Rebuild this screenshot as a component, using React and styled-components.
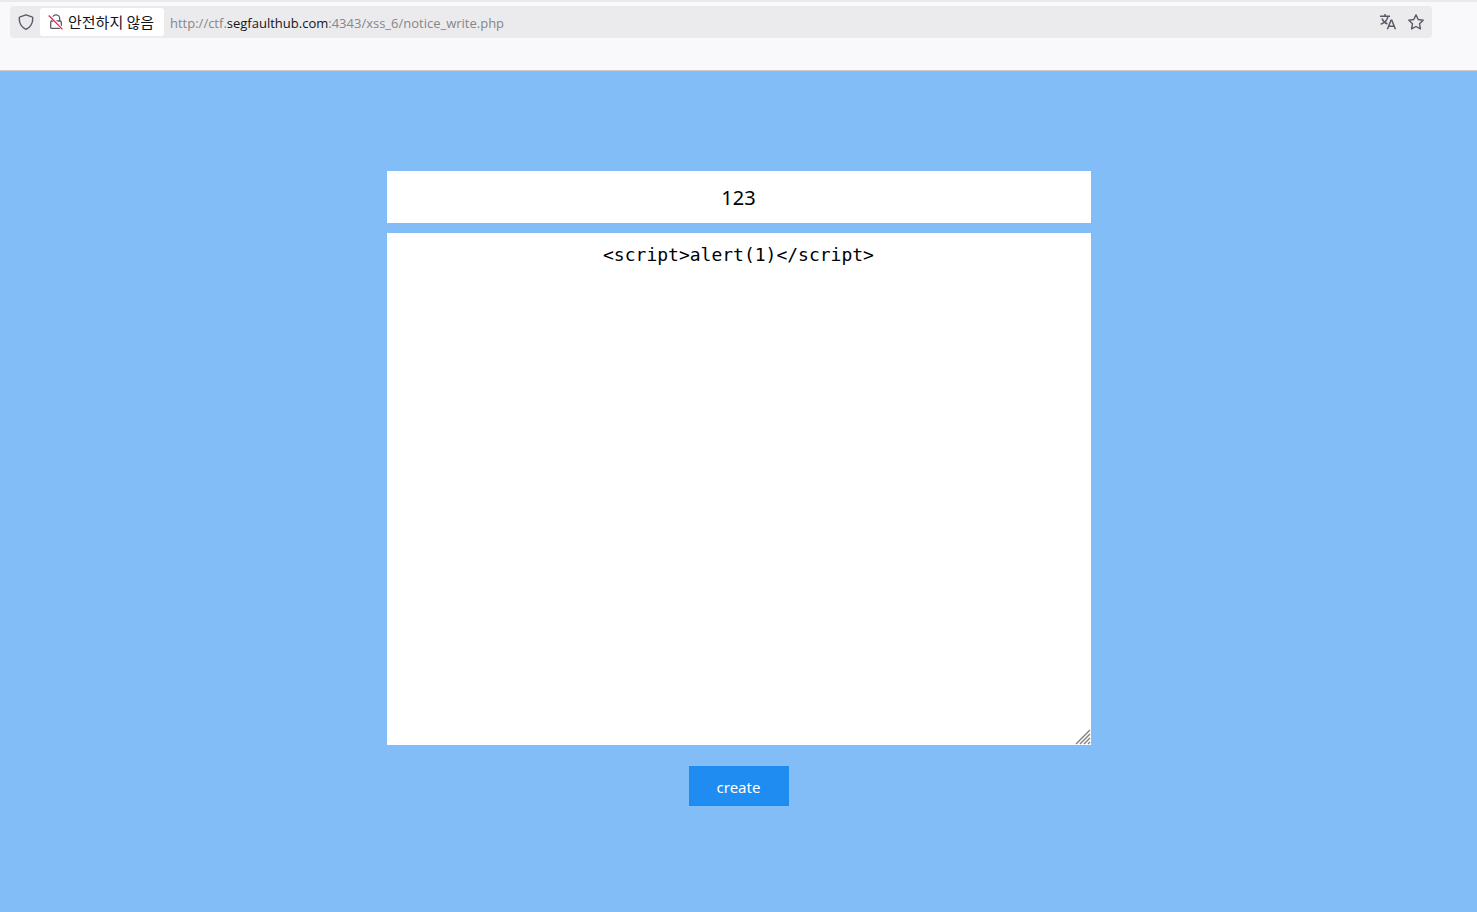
import React from "react";
import styled, { createGlobalStyle } from "styled-components";

const GlobalStyle = createGlobalStyle`
  * { box-sizing: border-box; }
  body {
    margin: 0;
    background: #83bdf7;
    font-family: "Noto Sans", "Noto Sans CJK KR", sans-serif;
  }
`;

const Page = styled.div`
  min-height: 100vh;
  display: flex;
  flex-direction: column;
`;

const Toolbar = styled.header`
  height: 71px;
  padding: 4px 45px 0 10px;
  background: #f9f9fb;
  border-top: 2px solid #eaeaed;
  border-bottom: 1px solid #cccccc;
`;

const AddressBar = styled.div`
  display: flex;
  align-items: center;
  height: 32px;
  padding: 0 2px 0 6px;
  border-radius: 4px;
  background: #ebebed;
`;

const IconButton = styled.button`
  display: flex;
  align-items: center;
  justify-content: center;
  width: ${(p) => p.$width || 28}px;
  height: 28px;
  padding: 0;
  border: 0;
  background: transparent;
  color: #5b5b66;
`;

const SecurityButton = styled.button`
  display: flex;
  align-items: center;
  gap: 4px;
  min-width: 124px;
  height: 28px;
  margin-left: 4px;
  padding: 0 8px;
  border: 0;
  border-radius: 3px;
  background: #ffffff;
  color: #15141a;
  font-family: "Noto Sans CJK KR", sans-serif;
  font-size: 15px;
  line-height: 20px;
  white-space: nowrap;
`;

const Address = styled.div`
  flex: 1;
  min-width: 0;
  padding: 2px 0 0 6px;
  overflow: hidden;
  color: #86868a;
  font-family: "Open Sans", sans-serif;
  font-size: 13px;
  line-height: 20px;
  white-space: nowrap;
`;

const Domain = styled.span`
  color: #15141a;
`;

const Form = styled.form`
  display: flex;
  flex-direction: column;
  align-items: center;
  width: 100%;
  max-width: 704px;
  margin: 100px auto 0;
`;

const TitleInput = styled.input`
  width: 100%;
  height: 52px;
  padding: 0 10px;
  border: 0;
  border-radius: 0;
  background: #ffffff;
  color: #000000;
  font-family: "Noto Sans", sans-serif;
  font-size: 20px;
  text-align: center;
`;

const ContentField = styled.div`
  position: relative;
  width: 100%;
  margin-top: 10px;
`;

const ContentArea = styled.textarea`
  display: block;
  width: 100%;
  height: 512px;
  padding: 10px;
  border: 0;
  border-radius: 0;
  background: #ffffff;
  color: #000000;
  font-family: "DejaVu Sans Mono", monospace;
  font-size: 18px;
  line-height: 24px;
  text-align: center;
  resize: vertical;

  &::-webkit-resizer {
    background: transparent;
  }
`;

const ResizeGrip = styled.svg`
  position: absolute;
  right: 0;
  bottom: 0;
  pointer-events: none;
`;

const CreateButton = styled.button`
  width: 100px;
  height: 40px;
  margin-top: 21px;
  padding: 2px 0 0;
  border: 0;
  background: #1e8cf1;
  color: #ffffff;
  font-family: "Noto Sans", sans-serif;
  font-size: 15px;
`;

function ShieldIcon() {
  return (
    <svg width="16" height="16" viewBox="0 0 16 16" fill="none" stroke="currentColor" strokeWidth="1.4" strokeLinejoin="round" aria-hidden="true">
      <path d="M8 .8 13.900 2.800c.6.2.9.6.9 1.200 0 5.300-2.200 9.300-6.800 11.300C3.400 13.300 1.200 9.300 1.200 4c0-.6.3-1 .9-1.200Z" />
    </svg>
  );
}

function InsecureLockIcon() {
  return (
    <svg width="16" height="16" viewBox="0 0 16 16" fill="none" strokeWidth="1.3" aria-hidden="true">
      <g stroke="#5b5b66">
        <path d="M4.300 7V4.500a3.700 3.700 0 0 1 7.400 0V7" />
        <rect x="2.700" y="7" width="10.600" height="7.400" rx="1.200" />
      </g>
      <path d="M1.500 1.500 14.500 15" stroke="#ffffff" strokeWidth="2.800" />
      <path d="M.8 1.500 14.500 15.400" stroke="#e22850" />
    </svg>
  );
}

function TranslateIcon() {
  return (
    <svg width="16" height="16" viewBox="0 0 16 16" fill="none" stroke="currentColor" strokeWidth="1.5" aria-hidden="true">
      <path d="M0 2.200h10M5 0v2.200M8 2.200C7.400 6 4.500 9 .7 10.300M2 4.500c1 2.700 3 4.500 5.500 5.500" />
      <path d="M7.400 15.300 11 6.300h.8l3.600 9M8.600 12.300h5.600" />
    </svg>
  );
}

function StarIcon() {
  return (
    <svg width="16" height="16" viewBox="0 0 16 16" fill="none" stroke="currentColor" strokeWidth="1.4" strokeLinejoin="round" aria-hidden="true">
      <path d="m8 .9 2.200 4.600 5 .7-3.700 3.500.9 5.200L8 12.500l-4.400 2.400.9-5.200L.8 6.200l5-.7Z" />
    </svg>
  );
}

export default function App() {
  return (
    <>
      <GlobalStyle />
      <Page>
        <Toolbar>
          <AddressBar>
            <IconButton type="button" $width={20} aria-label="Tracking protection">
              <ShieldIcon />
            </IconButton>
            <SecurityButton type="button">
              <InsecureLockIcon />
              안전하지 않음
            </SecurityButton>
            <Address>
              http://ctf.<Domain>segfaulthub.com</Domain>:4343/xss_6/notice_write.php
            </Address>
            <IconButton type="button" aria-label="Translate page">
              <TranslateIcon />
            </IconButton>
            <IconButton type="button" aria-label="Bookmark page">
              <StarIcon />
            </IconButton>
          </AddressBar>
        </Toolbar>
        <main>
          <Form onSubmit={(event) => event.preventDefault()}>
            <TitleInput type="text" name="title" aria-label="Title" defaultValue="123" />
            <ContentField>
              <ContentArea
                name="content"
                aria-label="Content"
                spellCheck={false}
                defaultValue="<script>alert(1)</script>"
              />
              <ResizeGrip width="16" height="16" viewBox="0 0 16 16" stroke="#808080" strokeWidth="1.4" aria-hidden="true">
                <path d="M1 15 15 1M5 15 15 5M9 15l6-6M13 15l2-2" />
              </ResizeGrip>
            </ContentField>
            <CreateButton type="submit">create</CreateButton>
          </Form>
        </main>
      </Page>
    </>
  );
}
